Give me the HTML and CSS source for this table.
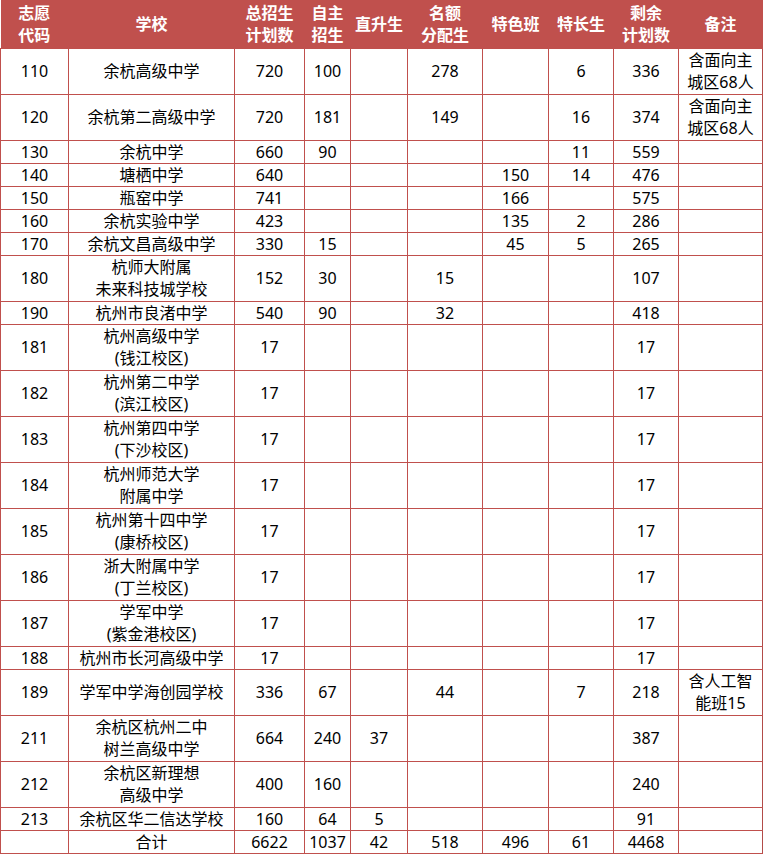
FILE: index.html
```html
<!DOCTYPE html>
<html lang="zh-CN">
<head>
<meta charset="utf-8">
<title>招生计划</title>
<link rel="stylesheet" href="styles.css">
</head>
<body>
<table class="plan">
  <colgroup>
    <col class="c-code"><col class="c-school"><col class="c-total"><col class="c-self"><col class="c-up"><col class="c-quota"><col class="c-feature"><col class="c-talent"><col class="c-rest"><col class="c-note">
  </colgroup>
  <thead>
    <tr class="head">
      <th>志愿<br>代码</th><th>学校</th><th>总招生<br>计划数</th><th>自主<br>招生</th><th>直升生</th><th>名额<br>分配生</th><th>特色班</th><th>特长生</th><th>剩余<br>计划数</th><th>备注</th>
    </tr>
  </thead>
  <tbody>
    <tr class="tall"><td>110</td><td>余杭高级中学</td><td>720</td><td>100</td><td></td><td>278</td><td></td><td>6</td><td>336</td><td>含面向主<br>城区68人</td></tr>
    <tr class="tall"><td>120</td><td>余杭第二高级中学</td><td>720</td><td>181</td><td></td><td>149</td><td></td><td>16</td><td>374</td><td>含面向主<br>城区68人</td></tr>
    <tr class="short"><td>130</td><td>余杭中学</td><td>660</td><td>90</td><td></td><td></td><td></td><td>11</td><td>559</td><td></td></tr>
    <tr class="short"><td>140</td><td>塘栖中学</td><td>640</td><td></td><td></td><td></td><td>150</td><td>14</td><td>476</td><td></td></tr>
    <tr class="short"><td>150</td><td>瓶窑中学</td><td>741</td><td></td><td></td><td></td><td>166</td><td></td><td>575</td><td></td></tr>
    <tr class="short"><td>160</td><td>余杭实验中学</td><td>423</td><td></td><td></td><td></td><td>135</td><td>2</td><td>286</td><td></td></tr>
    <tr class="short"><td>170</td><td>余杭文昌高级中学</td><td>330</td><td>15</td><td></td><td></td><td>45</td><td>5</td><td>265</td><td></td></tr>
    <tr class="tall"><td>180</td><td>杭师大附属<br>未来科技城学校</td><td>152</td><td>30</td><td></td><td>15</td><td></td><td></td><td>107</td><td></td></tr>
    <tr class="short"><td>190</td><td>杭州市良渚中学</td><td>540</td><td>90</td><td></td><td>32</td><td></td><td></td><td>418</td><td></td></tr>
    <tr class="tall"><td>181</td><td>杭州高级中学<br>(钱江校区)</td><td>17</td><td></td><td></td><td></td><td></td><td></td><td>17</td><td></td></tr>
    <tr class="tall"><td>182</td><td>杭州第二中学<br>(滨江校区)</td><td>17</td><td></td><td></td><td></td><td></td><td></td><td>17</td><td></td></tr>
    <tr class="tall"><td>183</td><td>杭州第四中学<br>(下沙校区)</td><td>17</td><td></td><td></td><td></td><td></td><td></td><td>17</td><td></td></tr>
    <tr class="tall"><td>184</td><td>杭州师范大学<br>附属中学</td><td>17</td><td></td><td></td><td></td><td></td><td></td><td>17</td><td></td></tr>
    <tr class="tall"><td>185</td><td>杭州第十四中学<br>(康桥校区)</td><td>17</td><td></td><td></td><td></td><td></td><td></td><td>17</td><td></td></tr>
    <tr class="tall"><td>186</td><td>浙大附属中学<br>(丁兰校区)</td><td>17</td><td></td><td></td><td></td><td></td><td></td><td>17</td><td></td></tr>
    <tr class="tall"><td>187</td><td>学军中学<br>(紫金港校区)</td><td>17</td><td></td><td></td><td></td><td></td><td></td><td>17</td><td></td></tr>
    <tr class="short"><td>188</td><td>杭州市长河高级中学</td><td>17</td><td></td><td></td><td></td><td></td><td></td><td>17</td><td></td></tr>
    <tr class="tall"><td>189</td><td>学军中学海创园学校</td><td>336</td><td>67</td><td></td><td>44</td><td></td><td>7</td><td>218</td><td>含人工智<br>能班15</td></tr>
    <tr class="tall"><td>211</td><td>余杭区杭州二中<br>树兰高级中学</td><td>664</td><td>240</td><td>37</td><td></td><td></td><td></td><td>387</td><td></td></tr>
    <tr class="tall"><td>212</td><td>余杭区新理想<br>高级中学</td><td>400</td><td>160</td><td></td><td></td><td></td><td></td><td>240</td><td></td></tr>
    <tr class="short"><td>213</td><td>余杭区华二信达学校</td><td>160</td><td>64</td><td>5</td><td></td><td></td><td></td><td>91</td><td></td></tr>
    <tr class="short"><td></td><td>合计</td><td>6622</td><td>1037</td><td>42</td><td>518</td><td>496</td><td>61</td><td>4468</td><td></td></tr>
  </tbody>
</table>
</body>
</html>
```
FILE: styles.css
```css
html, body {
  margin: 0;
  padding: 0;
  background: #ffffff;
}

.plan {
  border-collapse: collapse;
  table-layout: fixed;
  width: 762px;
  font-family: "Noto Sans", "Noto Sans CJK SC", sans-serif;
  font-size: 16px;
  line-height: 22px;
  color: #000000;
}

.c-code { width: 68px; }
.c-school { width: 166px; }
.c-total { width: 70px; }
.c-self { width: 46px; }
.c-up { width: 57px; }
.c-quota { width: 75px; }
.c-feature { width: 66px; }
.c-talent { width: 65px; }
.c-rest { width: 65px; }
.c-note { width: 84px; }

.plan th,
.plan td {
  border: 1px solid #c0504d;
  padding: 0;
  text-align: center;
  vertical-align: middle;
  white-space: nowrap;
  overflow: hidden;
}

.head {
  height: 48px;
}

.head th {
  background: #c0504d;
  color: #ffffff;
  font-weight: bold;
  border-color: #c0504d;
  border-top: none;
}

.head th:first-child {
  border-left: none;
}

.tall {
  height: 46px;
}

.short {
  height: 23px;
}

.plan td:last-child {
  border-right-color: #b24c49;
}
```
